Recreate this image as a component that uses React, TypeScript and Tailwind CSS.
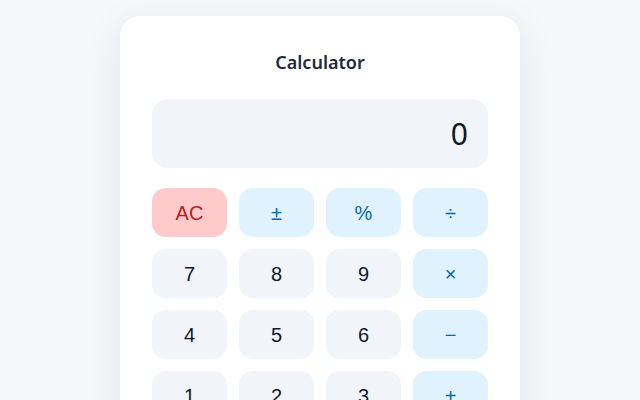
const keys: { label: string; kind: 'clear' | 'op' | 'num' }[] = [
  { label: 'AC', kind: 'clear' },
  { label: '±', kind: 'op' },
  { label: '%', kind: 'op' },
  { label: '÷', kind: 'op' },
  { label: '7', kind: 'num' },
  { label: '8', kind: 'num' },
  { label: '9', kind: 'num' },
  { label: '×', kind: 'op' },
  { label: '4', kind: 'num' },
  { label: '5', kind: 'num' },
  { label: '6', kind: 'num' },
  { label: '−', kind: 'op' },
  { label: '1', kind: 'num' },
  { label: '2', kind: 'num' },
  { label: '3', kind: 'num' },
  { label: '+', kind: 'op' },
  { label: '0', kind: 'num' },
  { label: '.', kind: 'num' },
  { label: '⌫', kind: 'num' },
  { label: '=', kind: 'op' },
];

const kindClass = {
  clear: 'bg-[#fecaca] text-[#b91c1c]',
  op: 'bg-[#e0f2fe] text-[#0369a1]',
  num: 'bg-[#f1f5f9] text-[#0f172a]',
};

export default function App() {
  return (
    <div className="flex h-[400px] w-[640px] justify-center overflow-hidden bg-[#f5f7fb] pt-4">
      <div className="h-[600px] w-[400px] rounded-[20px] bg-white px-8 pt-8 shadow-[0_10px_40px_rgba(15,23,42,0.08)]">
        {/* Title */}
        <h1 className="mb-[23px] text-center font-['Noto_Sans',sans-serif] text-lg font-semibold leading-7 text-[#1e293b]">
          Calculator
        </h1>

        {/* Display */}
        <div className="mb-5 flex h-[69px] items-center justify-end rounded-2xl bg-[#f1f5f9] px-5 font-['Noto_Sans',sans-serif] text-[30px] text-[#0f172a]">
          0
        </div>

        {/* Keypad */}
        <div className="grid grid-cols-4 gap-3">
          {keys.map((key) => (
            <button
              key={key.label}
              className={`flex h-[49px] items-center justify-center rounded-[14px] font-['Liberation_Sans',Arial,sans-serif] text-xl ${kindClass[key.kind]}`}
            >
              {key.label}
            </button>
          ))}
        </div>
      </div>
    </div>
  );
}
